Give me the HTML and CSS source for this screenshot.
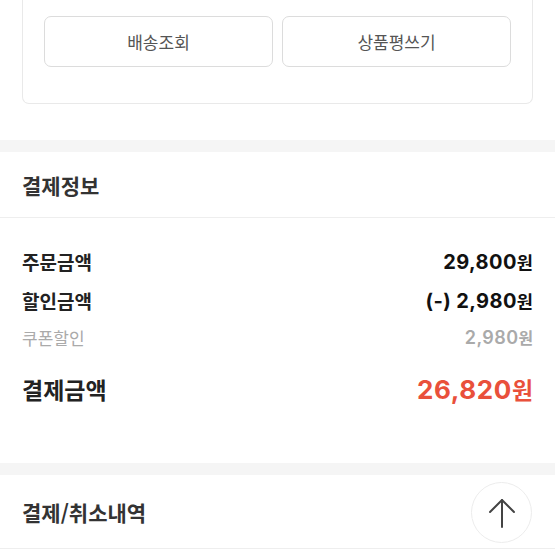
FILE: index.html
```html
<!DOCTYPE html>
<html lang="ko">
<head>
  <meta charset="UTF-8">
  <meta name="viewport" content="width=device-width, initial-scale=1.0">
  <title>주문상세</title>
  <link rel="stylesheet" href="styles.css">
</head>
<body>
  <section class="order-top">
    <div class="order-card">
      <div class="btn-row">
        <button type="button" class="line-btn">배송조회</button>
        <button type="button" class="line-btn">상품평쓰기</button>
      </div>
    </div>
  </section>

  <div class="gap"></div>

  <section class="pay-info">
    <h2 class="sec-title">결제정보</h2>
    <div class="pay-list">
      <div class="pay-row">
        <span class="label">주문금액</span>
        <span class="value">29,800<span class="won">원</span></span>
      </div>
      <div class="pay-row">
        <span class="label">할인금액</span>
        <span class="value">(-) 2,980<span class="won">원</span></span>
      </div>
      <div class="pay-row sub">
        <span class="label">쿠폰할인</span>
        <span class="value">2,980<span class="won">원</span></span>
      </div>
      <div class="pay-row total">
        <span class="label">결제금액</span>
        <span class="value">26,820<span class="won">원</span></span>
      </div>
    </div>
  </section>

  <div class="gap"></div>

  <section class="pay-history">
    <h2 class="sec-title tall">결제/취소내역</h2>
  </section>

  <button type="button" class="top-btn" aria-label="맨 위로">
    <svg width="30" height="30" viewBox="0 0 30 30" fill="none" stroke="#444" stroke-width="2" stroke-linecap="round" stroke-linejoin="round">
      <path d="M15 2v27"/>
      <path d="M3 14L15 2l12 12"/>
    </svg>
  </button>
</body>
</html>
```

FILE: styles.css
```css
body {
  margin: 0;
  font-family: "Noto Sans CJK KR", "Noto Sans", sans-serif;
  background-color: #fff;
  color: #222;
}
button {
  font-family: inherit;
}
.order-top {
  padding: 0 22px 36px;
}
.order-card {
  border: 1px solid #e9e9e9;
  border-top: 0;
  border-radius: 0 0 7px 7px;
  padding: 16px 21px 36px;
}
.btn-row {
  display: flex;
  gap: 9px;
}
.line-btn {
  flex: 1;
  height: 51px;
  background: #fff;
  border: 1px solid #dcdcdc;
  border-radius: 7px;
  font-size: 17px;
  color: #555;
  padding: 0;
  cursor: pointer;
}
.gap {
  height: 12px;
  background-color: #f5f5f5;
}
.sec-title {
  margin: 0;
  height: 65px;
  display: flex;
  align-items: center;
  padding: 0 22px;
  font-size: 21px;
  font-weight: 700;
  color: #333;
  border-bottom: 1px solid #eeeeee;
}
.sec-title.tall {
  height: 72px;
  padding-top: 1px;
}
.pay-list {
  padding: 24px 22px 49px;
}
.pay-row {
  display: flex;
  justify-content: space-between;
  align-items: center;
  height: 39px;
}
.pay-row .label {
  font-size: 19px;
  font-weight: 700;
  color: #222;
}
.pay-row .value {
  font-family: Inter, "Noto Sans CJK KR", sans-serif;
  font-size: 20px;
  font-weight: 700;
  letter-spacing: 0.4px;
  color: #111;
}
.won {
  font-family: "Noto Sans CJK KR", sans-serif;
  font-size: 0.88em;
  letter-spacing: 0;
}
.pay-row.sub {
  height: 34px;
}
.pay-row.sub .label {
  font-size: 17px;
  font-weight: 400;
  color: #aaa;
}
.pay-row.sub .value {
  font-size: 18px;
  font-weight: 600;
  color: #aaa;
}
.pay-row.total {
  height: 50px;
  margin-top: 10px;
}
.pay-row.total .label {
  font-size: 23px;
}
.pay-row.total .value {
  font-size: 26px;
  letter-spacing: 0.6px;
  color: #e9503b;
}
.top-btn {
  position: fixed;
  right: 23px;
  bottom: 12px;
  width: 61px;
  height: 61px;
  border-radius: 50%;
  border: 1px solid #ececec;
  background: #fff;
  display: flex;
  align-items: center;
  justify-content: center;
  padding: 0;
  cursor: pointer;
}
```
